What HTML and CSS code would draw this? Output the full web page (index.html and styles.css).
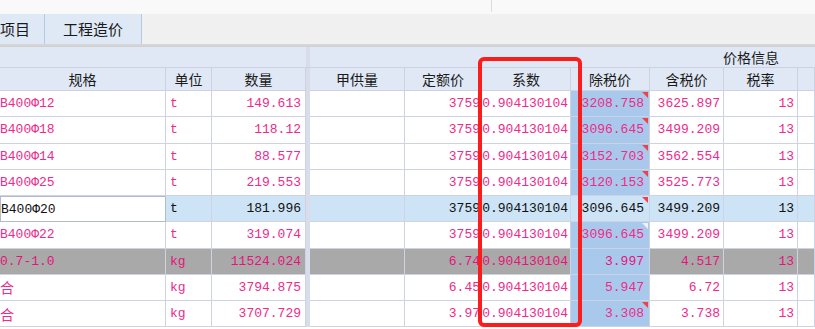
FILE: index.html
```html
<!DOCTYPE html>
<html lang="zh">
<head>
<meta charset="utf-8">
<link rel="stylesheet" href="styles.css">
</head>
<body>
<div class="app">
  <div class="topstrip"><span class="top-divider"></span></div>
  <div class="tabs">
    <div class="tab tab-first">项目</div>
    <div class="tab">工程造价</div>
  </div>
  <div class="tabs-line"></div>

  <div class="sheet">
    <div class="row head1">
      <div class="h1-left"></div>
      <div class="sep"></div>
      <div class="h1-right">价格信息</div>
    </div>
    <div class="row head2">
      <div class="hc">规格</div>
      <div class="hc">单位</div>
      <div class="hc">数量</div>
      <div class="sep"></div>
      <div class="hc">甲供量</div>
      <div class="hc">定额价</div>
      <div class="hc">系数</div>
      <div class="hc">除税价</div>
      <div class="hc">含税价</div>
      <div class="hc">税率</div>
      <div class="hc"></div>
    </div>

    <div class="row data">
      <div class="c spec">B400Φ12</div>
      <div class="c unit">t</div>
      <div class="c num">149.613</div>
      <div class="sep"></div>
      <div class="c"></div>
      <div class="c num quota">3759</div>
      <div class="c num coef">0.904130104</div>
      <div class="c num notax mark">3208.758</div>
      <div class="c num tax">3625.897</div>
      <div class="c num rate">13</div>
      <div class="c"></div>
    </div>
    <div class="row data">
      <div class="c spec">B400Φ18</div>
      <div class="c unit">t</div>
      <div class="c num">118.12</div>
      <div class="sep"></div>
      <div class="c"></div>
      <div class="c num quota">3759</div>
      <div class="c num coef">0.904130104</div>
      <div class="c num notax mark">3096.645</div>
      <div class="c num tax">3499.209</div>
      <div class="c num rate">13</div>
      <div class="c"></div>
    </div>
    <div class="row data">
      <div class="c spec">B400Φ14</div>
      <div class="c unit">t</div>
      <div class="c num">88.577</div>
      <div class="sep"></div>
      <div class="c"></div>
      <div class="c num quota">3759</div>
      <div class="c num coef">0.904130104</div>
      <div class="c num notax mark">3152.703</div>
      <div class="c num tax">3562.554</div>
      <div class="c num rate">13</div>
      <div class="c"></div>
    </div>
    <div class="row data">
      <div class="c spec">B400Φ25</div>
      <div class="c unit">t</div>
      <div class="c num">219.553</div>
      <div class="sep"></div>
      <div class="c"></div>
      <div class="c num quota">3759</div>
      <div class="c num coef">0.904130104</div>
      <div class="c num notax mark">3120.153</div>
      <div class="c num tax">3525.773</div>
      <div class="c num rate">13</div>
      <div class="c"></div>
    </div>
    <div class="row data selected">
      <div class="c spec focus">B400Φ20</div>
      <div class="c unit">t</div>
      <div class="c num">181.996</div>
      <div class="sep"></div>
      <div class="c"></div>
      <div class="c num quota">3759</div>
      <div class="c num coef">0.904130104</div>
      <div class="c num notax mark">3096.645</div>
      <div class="c num tax">3499.209</div>
      <div class="c num rate">13</div>
      <div class="c"></div>
    </div>
    <div class="row data">
      <div class="c spec">B400Φ22</div>
      <div class="c unit">t</div>
      <div class="c num">319.074</div>
      <div class="sep"></div>
      <div class="c"></div>
      <div class="c num quota">3759</div>
      <div class="c num coef">0.904130104</div>
      <div class="c num notax mark-light">3096.645</div>
      <div class="c num tax">3499.209</div>
      <div class="c num rate">13</div>
      <div class="c"></div>
    </div>
    <div class="row data grey">
      <div class="c spec">0.7-1.0</div>
      <div class="c unit">kg</div>
      <div class="c num">11524.024</div>
      <div class="sep"></div>
      <div class="c"></div>
      <div class="c num quota">6.74</div>
      <div class="c num coef">0.904130104</div>
      <div class="c num notax">3.997</div>
      <div class="c num tax">4.517</div>
      <div class="c num rate">13</div>
      <div class="c"></div>
    </div>
    <div class="row data">
      <div class="c spec"><span class="cjk">合</span></div>
      <div class="c unit">kg</div>
      <div class="c num">3794.875</div>
      <div class="sep"></div>
      <div class="c"></div>
      <div class="c num quota">6.45</div>
      <div class="c num coef">0.904130104</div>
      <div class="c num notax">5.947</div>
      <div class="c num tax">6.72</div>
      <div class="c num rate">13</div>
      <div class="c"></div>
    </div>
    <div class="row data">
      <div class="c spec"><span class="cjk">合</span></div>
      <div class="c unit">kg</div>
      <div class="c num">3707.729</div>
      <div class="sep"></div>
      <div class="c"></div>
      <div class="c num quota">3.97</div>
      <div class="c num coef">0.904130104</div>
      <div class="c num notax mark">3.308</div>
      <div class="c num tax">3.738</div>
      <div class="c num rate">13</div>
      <div class="c"></div>
    </div>

    <div class="highlight-box"></div>
  </div>
</div>
</body>
</html>
```

FILE: styles.css
```css
* { box-sizing: border-box; }

html, body {
  margin: 0;
  padding: 0;
  background: #ffffff;
  overflow: hidden;
}

body {
  width: 815px;
  height: 329px;
  font-family: "Noto Sans CJK SC", "Noto Sans", sans-serif;
  color: #1a1a1a;
}

.app {
  display: flex;
  flex-direction: column;
  width: 815px;
  height: 329px;
}

.topstrip {
  height: 14px;
  background: #f9f9f9;
  display: flex;
}

.top-divider {
  margin-left: 491px;
  width: 1px;
  height: 12px;
  background: #dcdcdc;
}

.tabs {
  height: 30px;
  background: #f0f0f0;
  display: flex;
}

.tab {
  width: 97px;
  background: #dfe9f6;
  border-right: 1px solid #b7c9e2;
  font-size: 15px;
  line-height: 30px;
  text-align: center;
  color: #1a1a1a;
  overflow: hidden;
  white-space: nowrap;
}

.tab-first {
  width: 45px;
  text-align: left;
  padding-left: 0;
}

.tabs-line {
  height: 3px;
  background: linear-gradient(#d9d9d9, #cfcfcf);
}

.sheet {
  position: relative;
  flex: 1;
  overflow: hidden;
}

.row {
  display: grid;
  grid-template-columns: 166px 46px 94px 4px 95px 77px 89px 79px 74px 74px 17px;
}

.sep {
  background: #d9dcea;
}

.head1 {
  height: 21px;
  background: #e0e8f5;
  border-bottom: 1px solid #ccd2e4;
}

.h1-left {
  grid-column: 1 / 4;
}

.h1-right {
  grid-column: 5 / 12;
  text-align: right;
  padding-right: 36px;
  font-size: 14px;
  line-height: 20px;
  color: #1a1a1a;
}

.head2 {
  height: 23px;
  background: #e0e8f5;
}

.hc {
  border-right: 1px solid #ccd2e4;
  border-bottom: 1px solid #ccd2e4;
  font-size: 14px;
  line-height: 22px;
  text-align: center;
  color: #1a1a1a;
}

.data {
  height: 26.25px;
  background: #ffffff;
  color: #ee2a8a;
}

.c {
  border-right: 1px solid #cfd2e2;
  border-bottom: 1px solid #cfd2e2;
  font-family: "Liberation Mono", "DejaVu Sans Mono", monospace;
  font-size: 13px;
  display: flex;
  align-items: center;
  white-space: nowrap;
  overflow: hidden;
  position: relative;
}

.spec {
  justify-content: flex-start;
  padding-left: 0;
}

.cjk {
  font-family: "Noto Sans CJK SC", sans-serif;
  font-size: 14px;
}

.unit {
  padding-left: 4px;
}

.num {
  justify-content: flex-end;
  padding-right: 4px;
}

.quota {
  padding-right: 1px;
}

.coef {
  padding-right: 2px;
}

.notax {
  background: #a9c9ec;
  padding-right: 5px;
}

.tax {
  padding-right: 3px;
}

.rate {
  padding-right: 3px;
}

.mark::after,
.mark-light::after {
  content: "";
  position: absolute;
  top: 1px;
  right: 1px;
  width: 0;
  height: 0;
  border-top: 6px solid #f0404a;
  border-left: 6px solid transparent;
}

.mark-light::after {
  border-top-color: #eef3fa;
}

.selected {
  background: #cde3f6;
  color: #111111;
}

.selected .notax {
  background: #cde3f6;
}

.focus {
  background: #ffffff;
  border: 1px solid #b4bccb;
}

.grey {
  background: #a9a9a9;
  color: #e4147c;
}

.highlight-box {
  position: absolute;
  left: 478px;
  top: 10px;
  width: 104px;
  height: 270px;
  border: 4px solid #fb1c1c;
  border-radius: 6px;
  pointer-events: none;
}
```
